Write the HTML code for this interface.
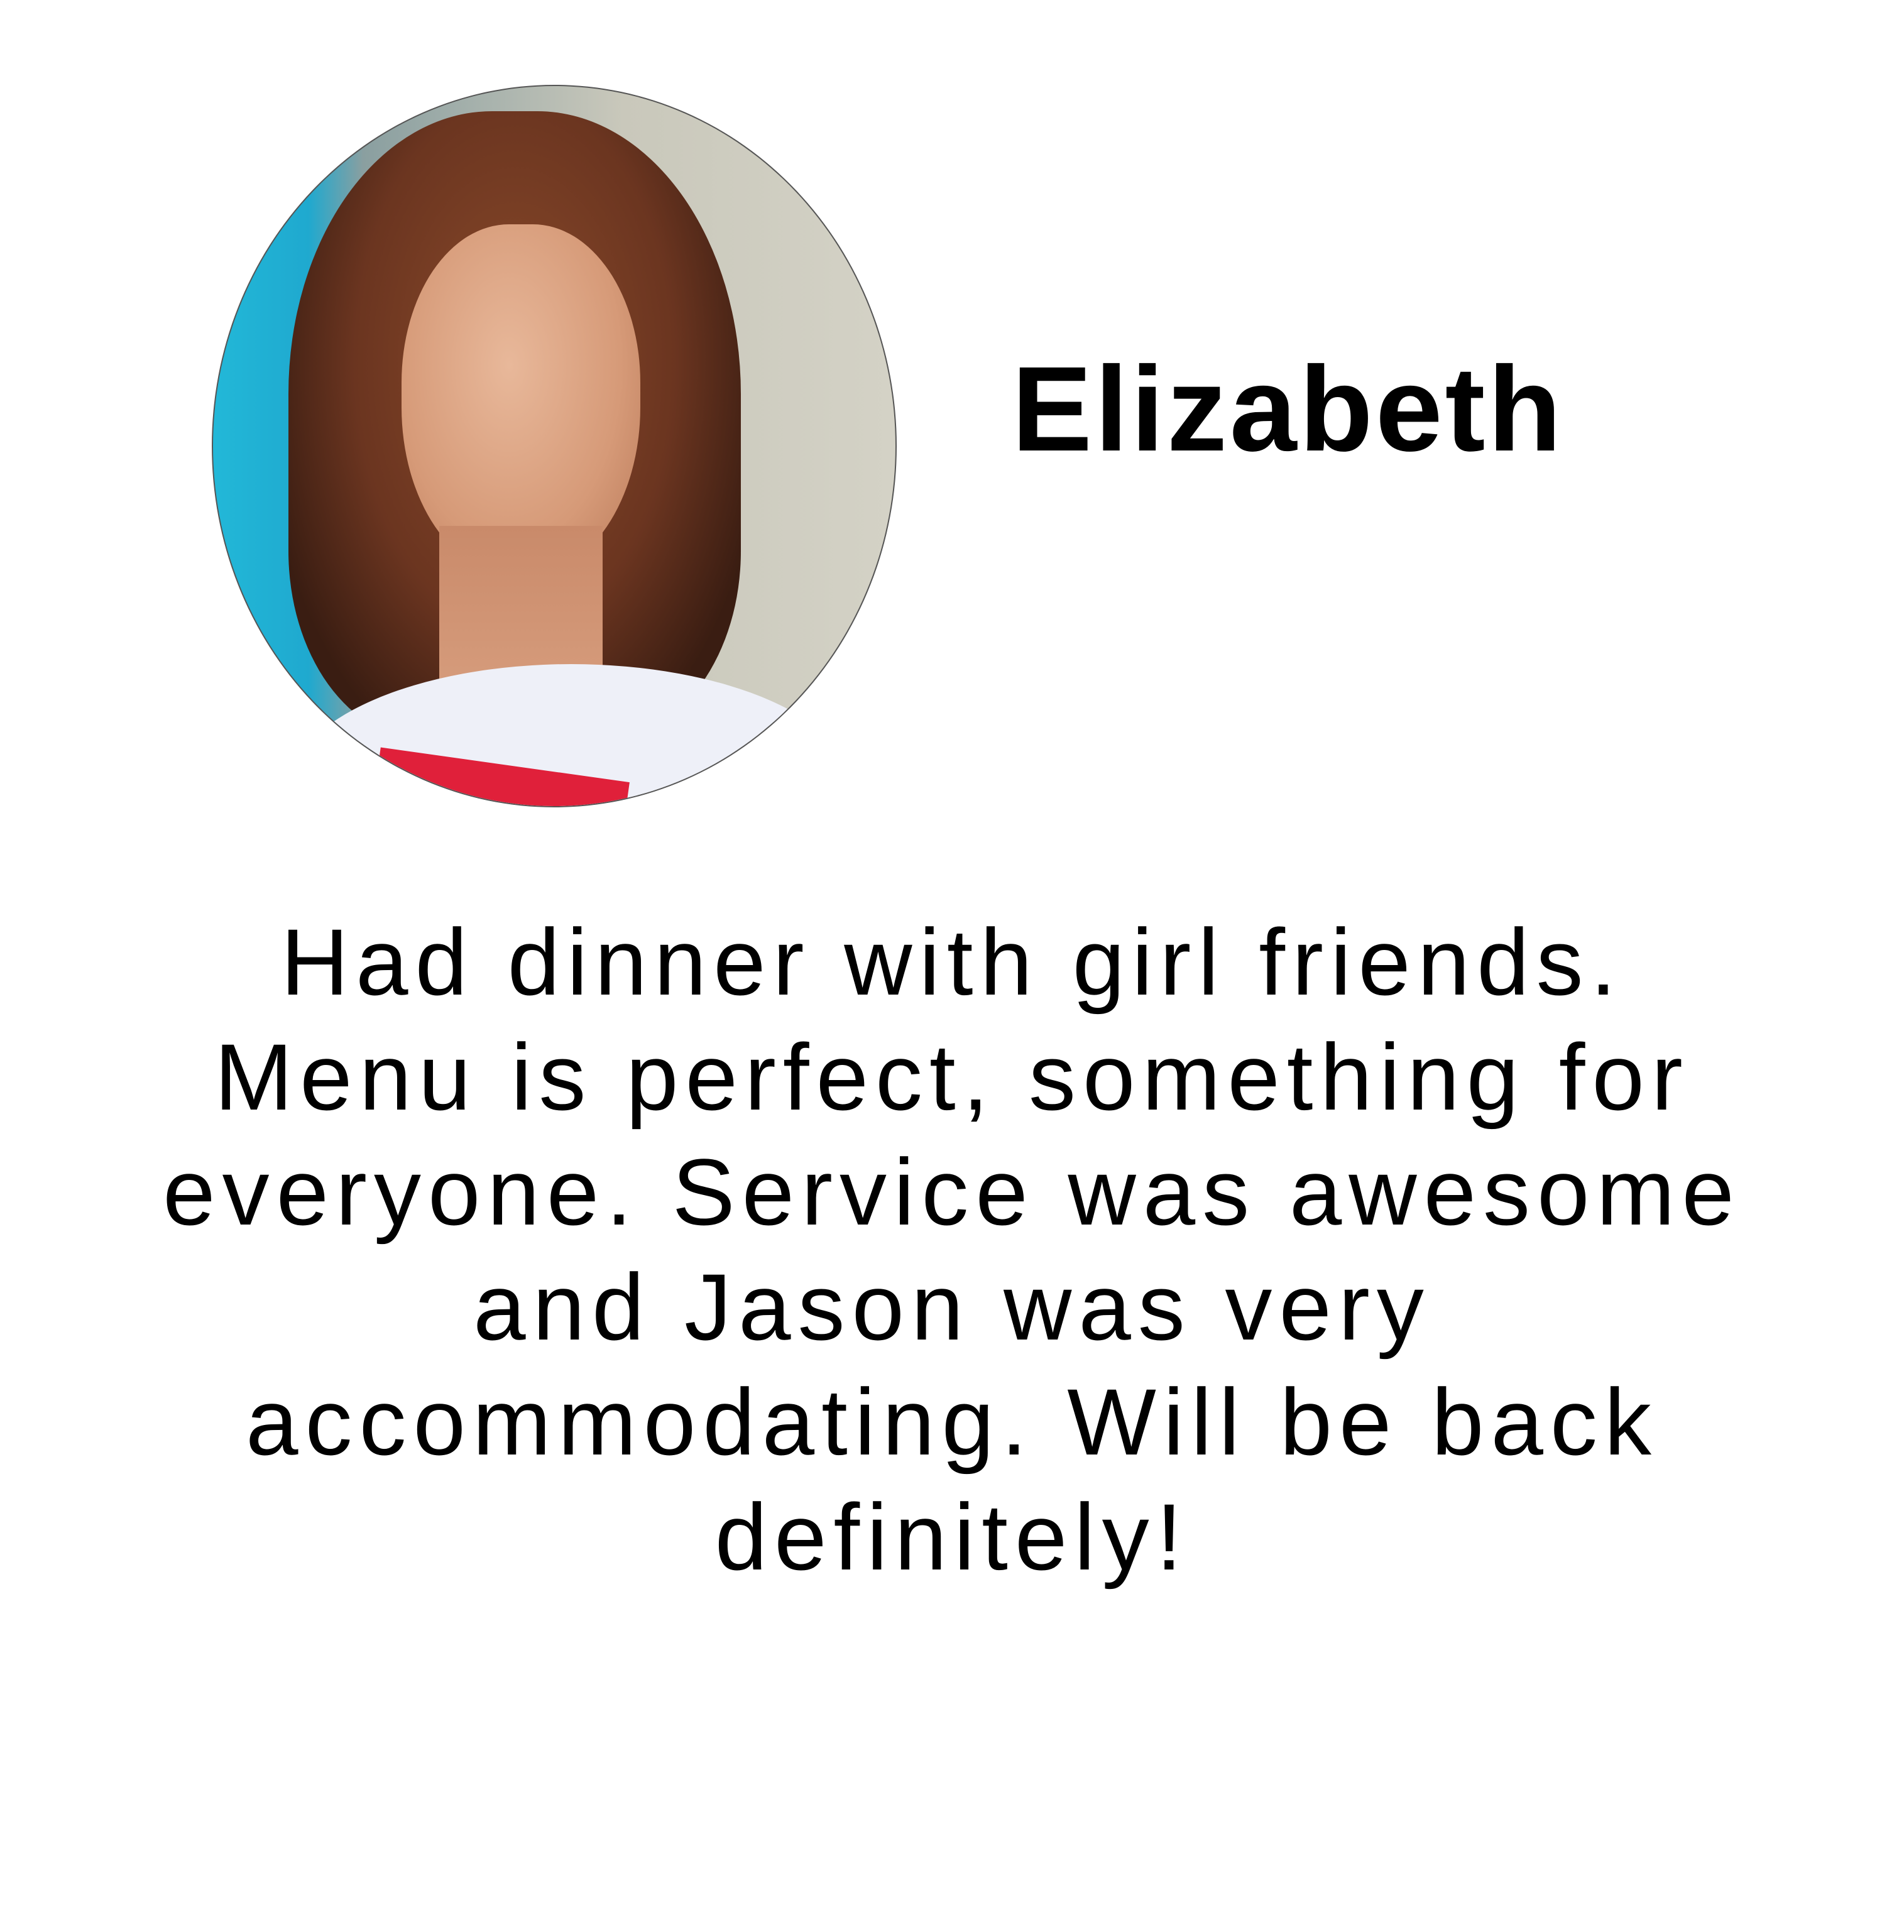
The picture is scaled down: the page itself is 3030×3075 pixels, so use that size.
<!DOCTYPE html>
<html><head><meta charset="utf-8"><style>
html,body{margin:0;padding:0;background:#fff;width:3030px;height:3075px;overflow:hidden}
.c{position:absolute;left:337px;top:135px;width:1086px;height:1146px;border-radius:50%;overflow:hidden;border:2px solid #555;
background:linear-gradient(90deg,#22b8d8 0%,#1fa9cf 14%,#8a9fa0 22%,#c9c8bb 60%,#d4d2c6 100%)}
.c div{position:absolute}
.name{position:absolute;left:1610px;top:540px;font:bold 192px "Liberation Sans",sans-serif;color:#000;letter-spacing:4px}
.t{position:absolute;left:0;width:3030px;top:1440px;text-align:center;font:150px/183px "Liberation Sans",sans-serif;color:#000;letter-spacing:11px}
</style></head><body>
<div class="c">
 <div style="left:120px;top:40px;width:720px;height:1000px;border-radius:45% 45% 30% 30%;background:radial-gradient(ellipse at 50% 40%,#8a4a2a 0%,#6b3520 50%,#3a1d12 80%)"></div>
 <div style="left:300px;top:220px;width:380px;height:560px;border-radius:45% 45% 48% 48%;background:radial-gradient(ellipse at 45% 40%,#e8b89a 0%,#d69a78 60%,#b87858 100%)"></div>
 <div style="left:360px;top:700px;width:260px;height:320px;background:linear-gradient(#c98a6a,#d9a080)"></div>
 <div style="left:120px;top:920px;width:900px;height:400px;border-radius:50% 50% 0 0;background:#eef0f8"></div>
 <div style="left:260px;top:1080px;width:400px;height:70px;background:#e0203a;transform:rotate(8deg)"></div>
</div>
<div class="name">Elizabeth</div>
<div class="t">Had dinner with girl friends.<br>Menu is perfect, something for<br>everyone. Service was awesome<br>and Jason was very<br>accommodating. Will be back<br>definitely!</div>
</body></html>
